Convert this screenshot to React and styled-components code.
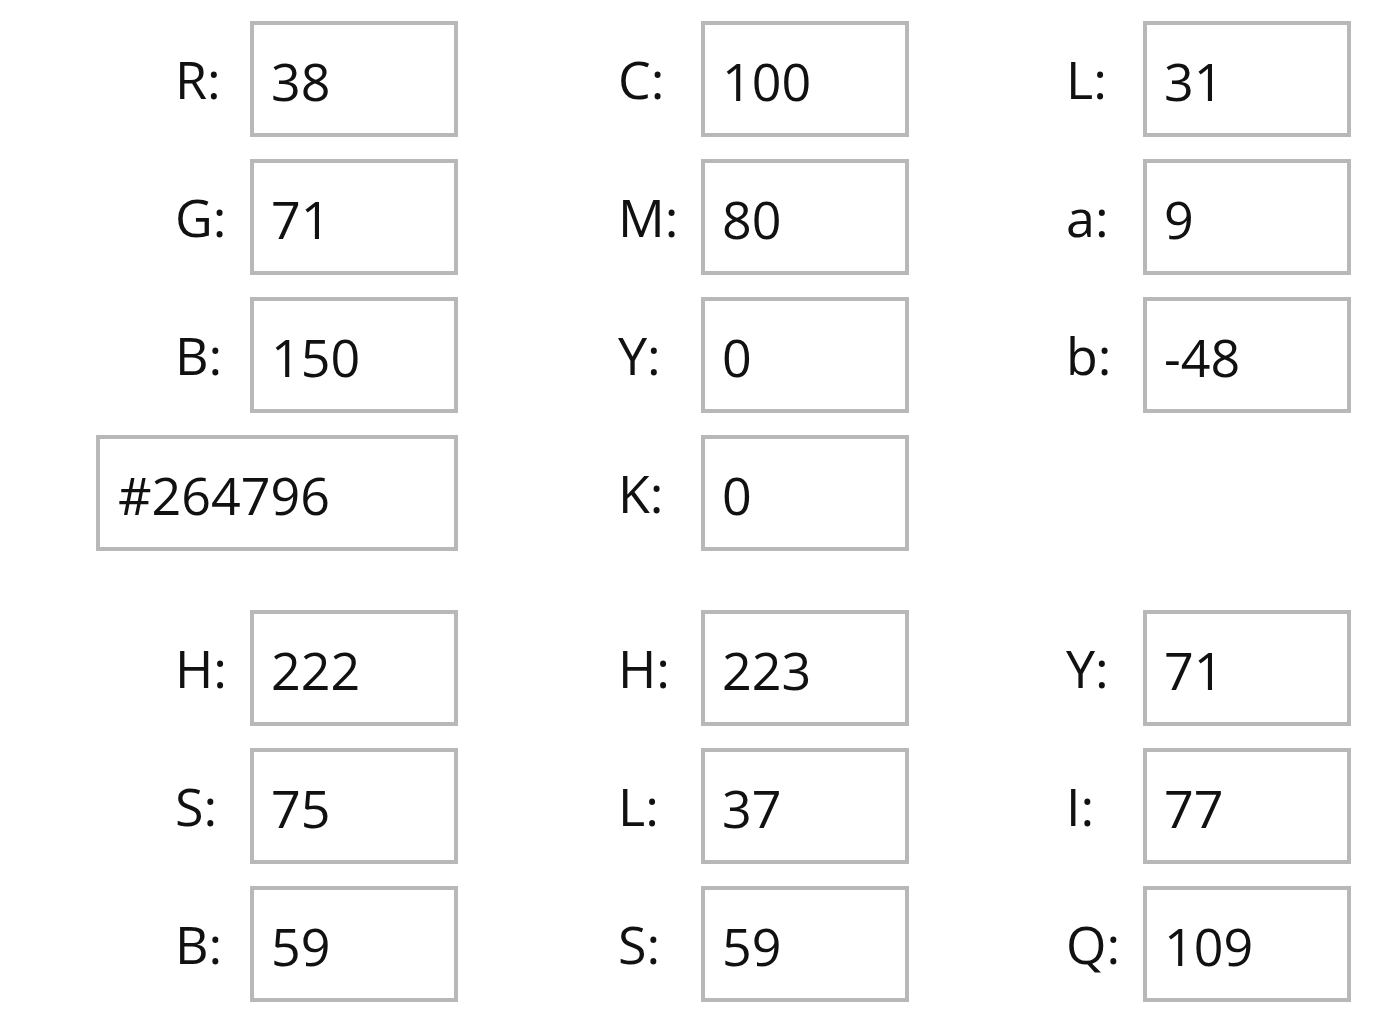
import React from "react";
import styled, { createGlobalStyle } from "styled-components";

const Global = createGlobalStyle`
  html, body { margin: 0; padding: 0; background: #ffffff; }
  body { font-family: "Open Sans", "Noto Sans", "DejaVu Sans", sans-serif; color: #000; }
`;

const Page = styled.div`
  display: flex;
  flex-direction: column;
  gap: 59px;
  padding: 21px 0 0 96px;
  width: 1384px;
  height: 1035px;
  box-sizing: border-box;
  background: #fff;
`;

const Section = styled.div`
  display: flex;
  align-items: flex-start;
`;

const Column = styled.div`
  display: flex;
  flex-direction: column;
  gap: 22px;
  margin-left: ${(p) => p.$offset || 0}px;
`;

const Field = styled.div`
  display: flex;
  align-items: center;
`;

const Label = styled.span`
  width: ${(p) => p.$width}px;
  padding-left: ${(p) => p.$pad || 0}px;
  box-sizing: border-box;
  font-size: 52px;
  line-height: 1;
  color: #111;
`;

const Box = styled.div`
  width: ${(p) => p.$width || 208}px;
  height: 116px;
  box-sizing: border-box;
  border: 4px solid #b8b8b8;
  background: #fff;
  display: flex;
  align-items: center;
  padding-left: ${(p) => p.$pad || 17}px;
  padding-top: 2px;
  font-size: 52px;
  color: #111;
`;

const groups = [
  [
    { lw: 154, pad: 79, off: 0, rows: [["R:", "38"], ["G:", "71"], ["B:", "150"], [null, "#264796"]] },
    { lw: 83, off: 160, rows: [["C:", "100"], ["M:", "80"], ["Y:", "0"], ["K:", "0"]] },
    { lw: 77, off: 157, rows: [["L:", "31"], ["a:", "9"], ["b:", "-48"]] },
  ],
  [
    { lw: 154, pad: 79, off: 0, rows: [["H:", "222"], ["S:", "75"], ["B:", "59"]] },
    { lw: 83, off: 160, rows: [["H:", "223"], ["L:", "37"], ["S:", "59"]] },
    { lw: 77, off: 157, rows: [["Y:", "71"], ["I:", "77"], ["Q:", "109"]] },
  ],
];

export default function App() {
  return (
    <>
      <Global />
      <Page>
        {groups.map((cols, gi) => (
          <Section key={gi}>
            {cols.map((c, ci) => (
              <Column key={ci} $offset={c.off}>
                {c.rows.map(([label, value], ri) => (
                  <Field key={ri}>
                    {label ? (
                      <>
                        <Label $width={c.lw} $pad={c.pad}>{label}</Label>
                        <Box>{value}</Box>
                      </>
                    ) : (
                      <Box $width={362} $pad={18}>{value}</Box>
                    )}
                  </Field>
                ))}
              </Column>
            ))}
          </Section>
        ))}
      </Page>
    </>
  );
}
